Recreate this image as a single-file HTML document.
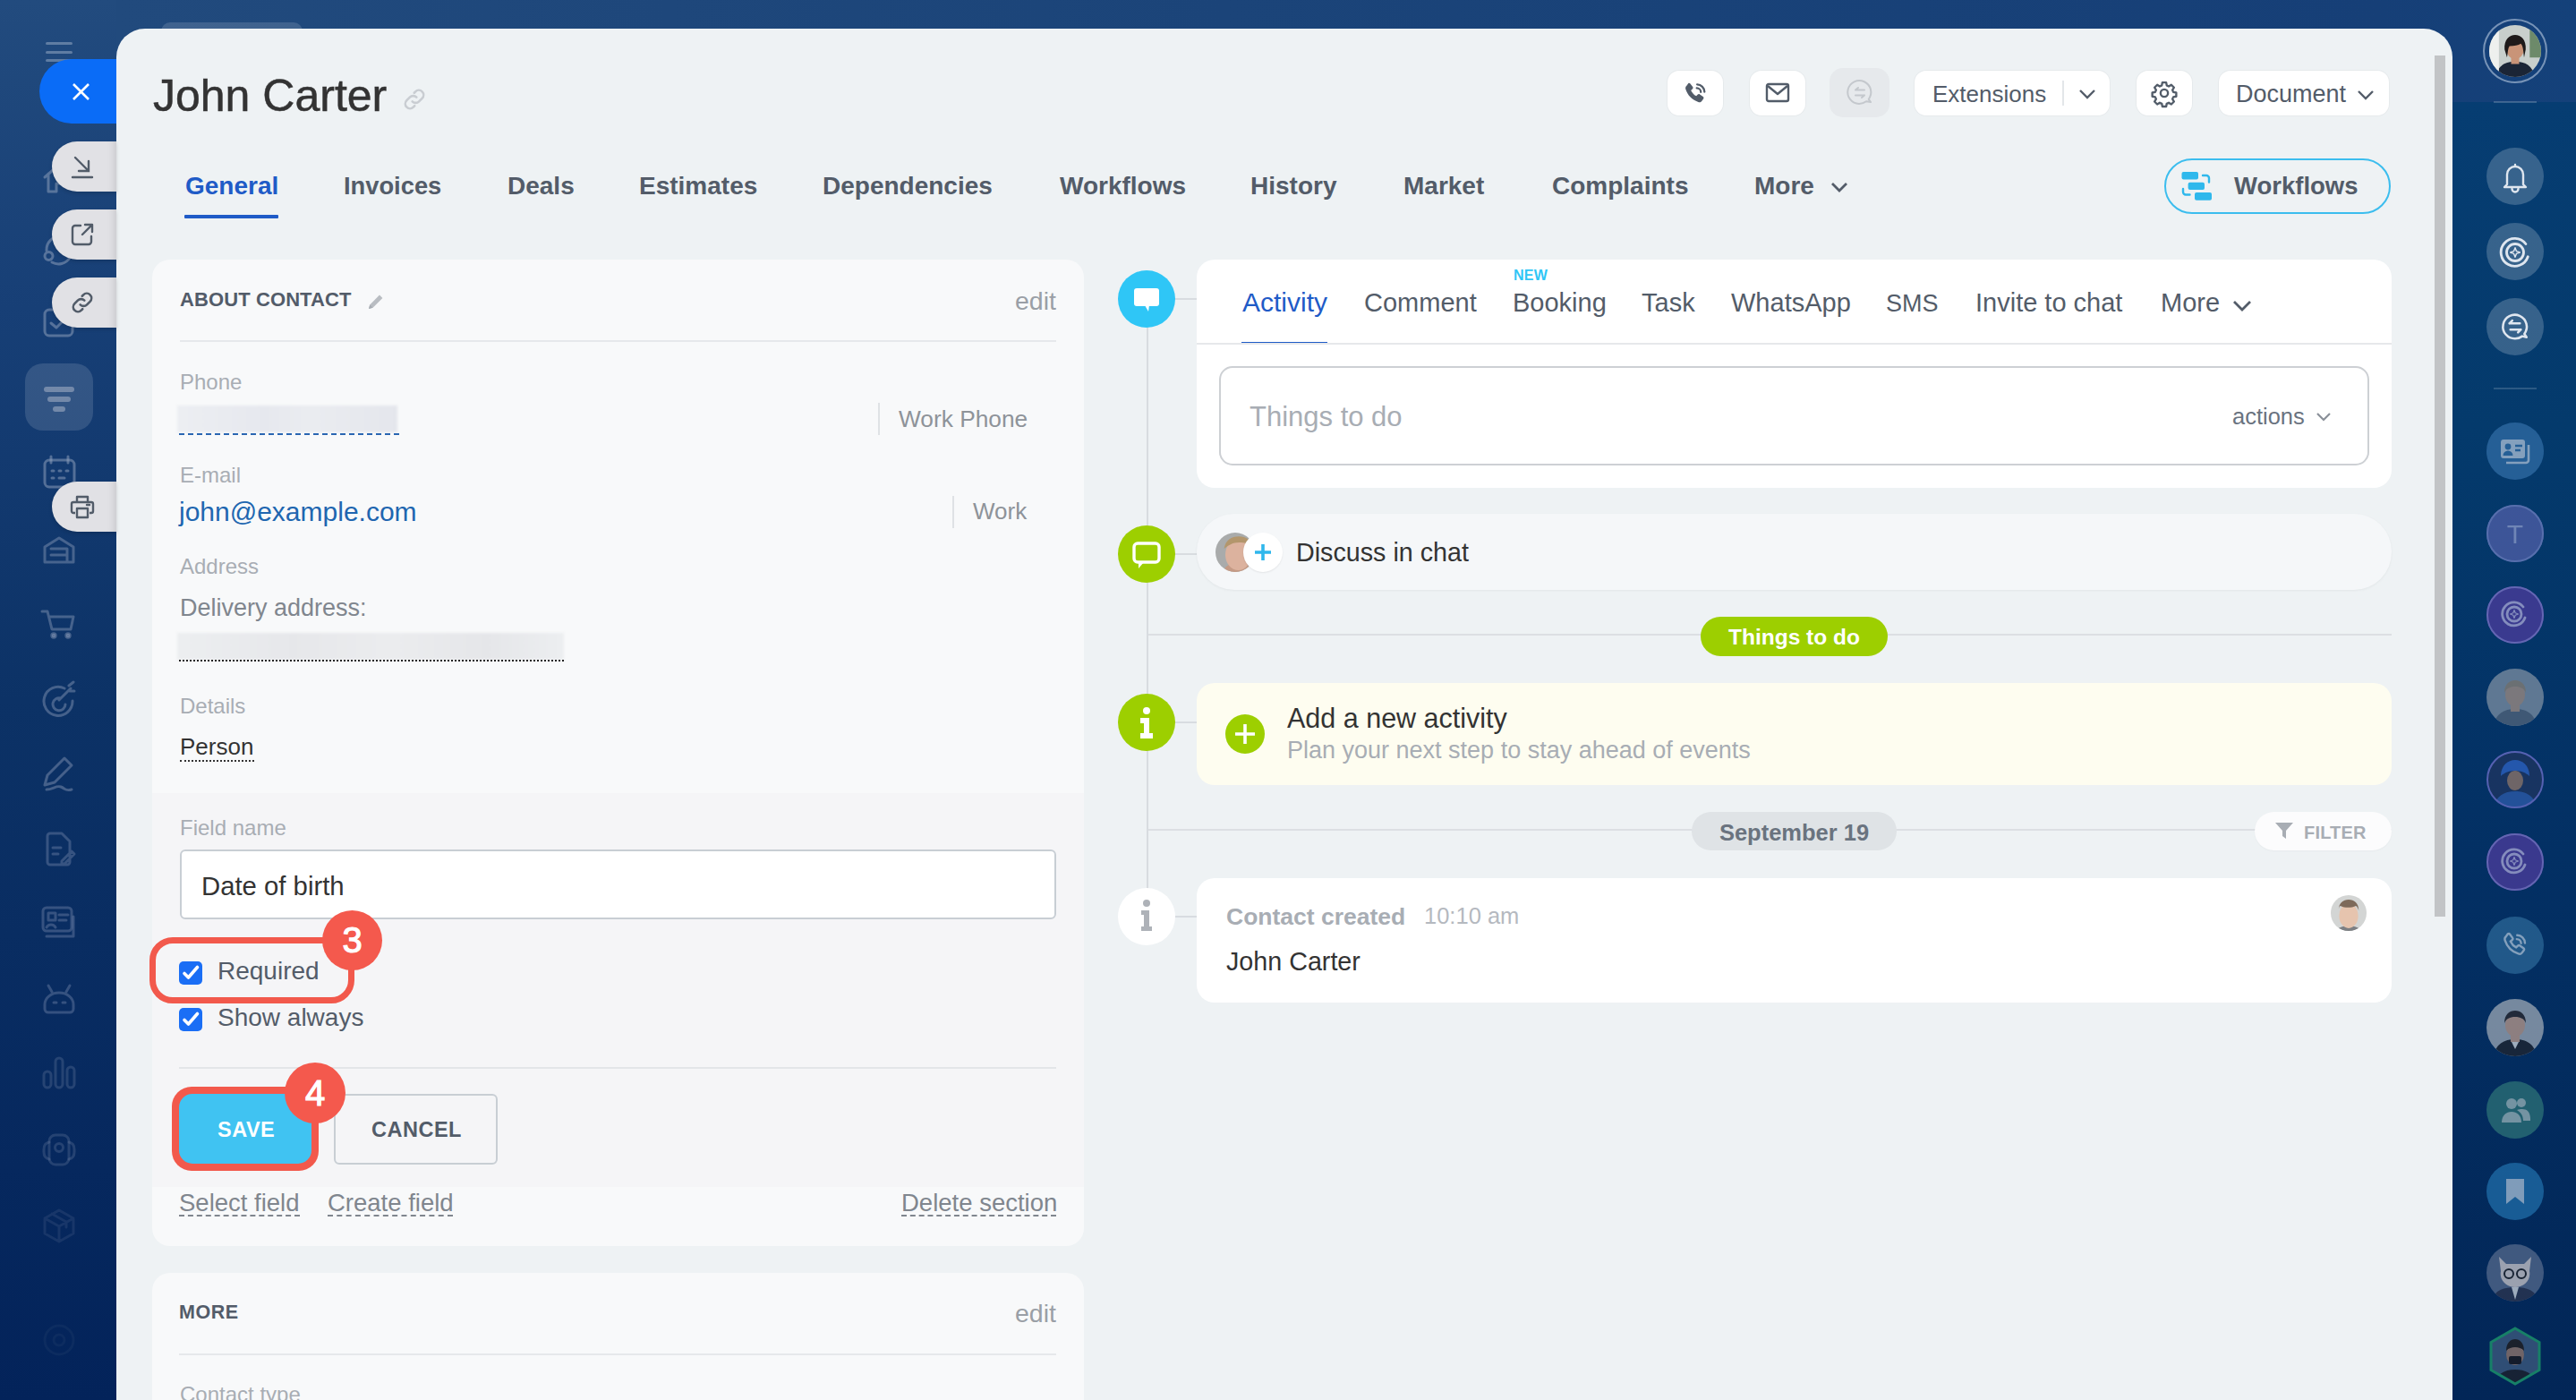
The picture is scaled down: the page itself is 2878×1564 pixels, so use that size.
<!DOCTYPE html>
<html><head><meta charset="utf-8">
<style>
*{box-sizing:border-box;margin:0;padding:0}
html,body{width:2878px;height:1564px;overflow:hidden}
body{position:relative;font-family:"Liberation Sans",sans-serif;background:linear-gradient(180deg,#224b7e 0%,#173f76 22%,#0c3266 50%,#03235a 100%);color:#333}
.a{position:absolute}
.t{position:absolute;line-height:1;white-space:nowrap}
.b{font-weight:bold}
.panel{left:130px;top:32px;width:2610px;height:1600px;background:#eef2f4;border-radius:32px 32px 0 0}
.hbtn{position:absolute;top:79px;height:50px;background:#fff;border-radius:13px;box-shadow:0 0 0 1px rgba(0,0,0,.03)}
.tab{position:absolute;top:194px;font-size:28px;font-weight:bold;color:#535c69;line-height:1}
.card{position:absolute;border-radius:20px}
.lbl{position:absolute;font-size:24px;color:#a8adb4;line-height:1;white-space:nowrap}
.atab{position:absolute;top:324px;font-size:29px;color:#535c69;line-height:1;white-space:nowrap}
.circ{position:absolute;left:1249px;width:64px;height:64px;border-radius:50%}
.rs{position:absolute;left:2778px;width:64px;height:64px;border-radius:50%}
svg{position:absolute;overflow:visible}
</style></head>
<body>
<!-- left rail -->
<div class="a" style="left:130px;top:0;width:2748px;height:114px;background:linear-gradient(90deg,#214a7d,#1b4479 45%,#163f77 92%,#14417a)"></div>

<div class="a" style="left:180px;top:25px;width:158px;height:20px;background:rgba(255,255,255,.14);border-radius:10px 10px 0 0"></div>
<!-- left sidebar icons (faint) -->
<div class="a" style="left:51px;top:47px;width:30px;height:3px;background:rgba(200,210,225,.38);border-radius:2px"></div>
<div class="a" style="left:51px;top:57px;width:30px;height:3px;background:rgba(200,210,225,.38);border-radius:2px"></div>
<div class="a" style="left:51px;top:66px;width:30px;height:3px;background:rgba(200,210,225,.38);border-radius:2px"></div>
<svg style="left:0;top:0" width="130" height="1564" viewBox="0 0 130 1564" fill="none" stroke-width="3" stroke-linecap="round" stroke-linejoin="round">
 <g stroke="rgba(150,165,192,.5)">
 <path d="M50 198l16-14 16 14M54 194v20h9v-9h6"/>
 <path d="M52 280a15 15 0 0 1 16-16M50 286a4.5 4.5 0 1 0 9 0a4.5 4.5 0 1 0-9 0M58 293a15 15 0 0 0 20-5"/>
 <rect x="50" y="346" width="31" height="29" rx="5"/><path d="M57 361l6 5 9-9"/>
 <rect x="50" y="514" width="33" height="30" rx="5"/><path d="M57 510v7M76 510v7M58 526h2M66 526h2M74 526h2M58 534h2M66 534h6"/>
 </g>
 <g stroke="rgba(140,155,185,.45)">
 <path d="M50 628v-17l16-10 16 10v17zM57 613h18v15M57 620h18"/>
 <path d="M47 683h6l5 20h21l3-14H55"/><circle cx="60" cy="710" r="2.2" fill="rgba(140,155,185,.5)"/><circle cx="76" cy="710" r="2.2" fill="rgba(140,155,185,.5)"/>
 <path d="M81 783a16 16 0 1 1-9-14M73 787a7 7 0 1 1-5-7M66 782l13-13M77 766l5-4M78 772h5"/>
 <path d="M50 877l3-11 19-19 8 8-19 19zM52 882c7 0 11-5 16-3s5 5 12 3"/>
 </g>
 <g stroke="rgba(130,145,178,.38)">
 <path d="M56 931h13l9 9v23a3 3 0 0 1-3 3H56a3 3 0 0 1-3-3V934a3 3 0 0 1 3-3zM59 947h9M59 954h6M69 962l11-11 3 3-11 11h-3z"/>
 <rect x="48" y="1014" width="32" height="26" rx="4"/><path d="M52 1046h30v-22M54 1020h8v8h-8zM66 1022h10M66 1028h8M52 1036c2-4 8-4 10 0"/>
 <path d="M50 1122a16 13 0 0 1 32 0v5a4 4 0 0 1-4 4H54a4 4 0 0 1-4-4zM54 1101l4 7M78 1101l-4 7M60 1120h3M70 1120h3"/>
 </g>
 <g stroke="rgba(120,135,170,.28)">
 <rect x="49" y="1197" width="8" height="18" rx="4"/><rect x="62" y="1182" width="8" height="33" rx="4"/><rect x="75" y="1192" width="8" height="23" rx="4"/>
 <rect x="55" y="1268" width="22" height="33" rx="7"/><circle cx="66" cy="1282" r="4.5"/><path d="M55 1276c-5 1-6 4-6 8v3c0 4 1 7 6 8M77 1276c5 1 6 4 6 8v3c0 4-1 7-6 8"/>
 </g>
 <g stroke="rgba(110,125,160,.18)">
 <path d="M66 1352l16 9v17l-16 9-16-9v-17zM50 1361l16 9 16-9M66 1370v17M58 1356l16 9v6"/>
 </g>
 <g stroke="rgba(100,115,150,.1)"><circle cx="66" cy="1497" r="16"/><circle cx="66" cy="1497" r="6"/></g>
</svg>
<div class="a" style="left:28px;top:406px;width:76px;height:75px;background:rgba(255,255,255,.13);border-radius:20px"></div>
<div class="a" style="left:49px;top:432px;width:34px;height:6px;background:rgba(170,180,200,.55);border-radius:3px"></div>
<div class="a" style="left:53px;top:443px;width:26px;height:6px;background:rgba(170,180,200,.55);border-radius:3px"></div>
<div class="a" style="left:59px;top:454px;width:14px;height:6px;background:rgba(170,180,200,.55);border-radius:3px"></div>


<!-- right sidebar -->
<div class="a" style="left:2740px;top:114px;width:138px;height:1450px;background:linear-gradient(180deg,#063d72 0%,#043a6c 25%,#033064 58%,#022657 100%)"></div>

<div class="a" style="left:2786px;top:113px;width:48px;height:2px;background:rgba(255,255,255,.2)"></div>
<div class="a" style="left:2774px;top:21px;width:72px;height:72px;border-radius:50%;border:2px solid rgba(200,215,235,.55)"></div>
<svg style="left:2781px;top:28px" width="58" height="58" viewBox="0 0 64 64"><defs><clipPath id="c57"><circle cx="32" cy="32" r="32"/></clipPath></defs><g clip-path="url(#c57)"><rect width="64" height="64" fill="#c8cfcc"/><path d="M8 64c2-14 12-19 24-19s22 5 24 19z" fill="#1b2536"/><rect x="27" y="38" width="10" height="10" fill="#c99478"/><ellipse cx="32" cy="29" rx="11" ry="13" fill="#c99478"/><path d="M19 30c-1-12 6-18 13-18s14 6 13 18l-2 10c-1-8-1-14-4-17-3 2-8 3-14 3-2 3-2 8-3 14z" fill="#1e1a1a"/><rect x="0" y="0" width="12" height="64" fill="#eef0ee"/><rect x="50" y="0" width="14" height="40" fill="#6d8a6a"/></g></svg>
<div class="rs" style="top:165px;background:rgba(255,255,255,.2)"></div>
<div class="rs" style="top:249px;background:rgba(255,255,255,.2)"></div>
<div class="rs" style="top:333px;background:rgba(255,255,255,.2)"></div>
<svg style="left:2794px;top:181px" width="32" height="34" viewBox="0 0 32 34" fill="none" stroke="#dfe6ef" stroke-width="2.4" stroke-linecap="round" stroke-linejoin="round"><path d="M7 25V14a9 9 0 0 1 18 0v11l3 3H4zM16 3v2M12.5 30a3.5 3.5 0 0 0 7 0"/></svg>
<svg style="left:2791px;top:263px" width="38" height="38" viewBox="0 0 32 32" fill="none" stroke="#dfe6ef" stroke-width="2.4" stroke-linecap="round"><path d="M28 20a13 13 0 1 1-2-12" /><circle cx="16" cy="16" r="8"/><path d="M16 11.5l1.2 3.3 3.3 1.2-3.3 1.2L16 20.5l-1.2-3.3-3.3-1.2 3.3-1.2z" stroke-width="1.2" stroke-linejoin="round"/></svg>
<svg style="left:2793px;top:348px" width="34" height="34" viewBox="0 0 32 32" fill="none" stroke="#dfe6ef" stroke-width="2.4" stroke-linecap="round" stroke-linejoin="round"><path d="M28 27l-2.3-3.5A12.5 12.5 0 1 0 16 28.5a12.5 12.5 0 0 0 7.5-2.5z"/><path d="M10 12.5h11M10 12.5l3-3M22 19H11M22 19l-3 3"/></svg>
<div class="a" style="left:2786px;top:433px;width:48px;height:2px;background:rgba(255,255,255,.16)"></div>
<div class="a" style="left:0;top:0;width:2878px;height:1564px;opacity:.78">
<div class="rs" style="top:472px;background:#2f6aa3"></div>
<svg style="left:2792px;top:489px" width="36" height="32" viewBox="0 0 36 32"><rect x="2" y="2" width="27" height="21" rx="3" fill="#a9bdd4"/><circle cx="10" cy="10" r="3.4" fill="#2f6aa3"/><path d="M4.5 20a5.5 5.5 0 0 1 11 0z" fill="#2f6aa3"/><path d="M18 9h8M18 14h6" stroke="#2f6aa3" stroke-width="2.4"/><path d="M33 8v17a3 3 0 0 1-3 3H8" fill="none" stroke="#a9bdd4" stroke-width="2.6"/></svg>
<svg style="left:2778px;top:564px" width="64" height="64" viewBox="0 0 64 64"><defs><clipPath id="c596"><circle cx="32" cy="32" r="32"/></clipPath></defs><g clip-path="url(#c596)"><rect width="64" height="64" fill="#4d5ea6"/><text x="32" y="43" font-family="Liberation Sans" font-size="30" fill="#8e9bcc" text-anchor="middle">T</text></g><circle cx="32" cy="32" r="31" fill="none" stroke="#6f7fc0" stroke-width="2"/></svg>
<svg style="left:2778px;top:655px" width="64" height="64" viewBox="0 0 64 64"><defs><clipPath id="c687"><circle cx="32" cy="32" r="32"/></clipPath></defs><g clip-path="url(#c687)"><rect width="64" height="64" fill="#4a3c9a"/><g transform="translate(15 15)" fill="none" stroke="#a9a6d6" stroke-width="2.8" stroke-linecap="round"><path d="M28 20a13 13 0 1 1-2-12" /><circle cx="16" cy="16" r="8"/><path d="M16 11.5l1.2 3.3 3.3 1.2-3.3 1.2L16 20.5l-1.2-3.3-3.3-1.2 3.3-1.2z" stroke-width="1.2" stroke-linejoin="round"/></g></g><circle cx="32" cy="32" r="31" fill="none" stroke="#7f74c8" stroke-width="2"/></svg>
<svg style="left:2778px;top:747px" width="64" height="64" viewBox="0 0 64 64"><defs><clipPath id="c779"><circle cx="32" cy="32" r="32"/></clipPath></defs><g clip-path="url(#c779)"><rect width="64" height="64" fill="#8e9aa8"/><path d="M8 64c2-14 12-19 24-19s22 5 24 19z" fill="#5d6a7c"/><rect x="27" y="38" width="10" height="10" fill="#b89a86"/><ellipse cx="32" cy="29" rx="11" ry="13" fill="#b89a86"/><path d="M20 27c0-10 6-14 12-14s12 4 12 14c-2-5-6-7-12-7s-10 2-12 7z" fill="#a08e78"/><rect width="64" height="64" fill="#0a3a72" opacity="0.15"/></g></svg>
<svg style="left:2778px;top:839px" width="64" height="64" viewBox="0 0 64 64"><defs><clipPath id="c871"><circle cx="32" cy="32" r="32"/></clipPath></defs><g clip-path="url(#c871)"><rect width="64" height="64" fill="#1f3560"/><path d="M8 64c2-14 12-19 24-19s22 5 24 19z" fill="#2c5aa8"/><ellipse cx="32" cy="33" rx="9" ry="11" fill="#8d7468"/><path d="M16 28c0-12 8-18 16-18s16 6 16 18c-4-4-10-6-16-6s-12 2-16 6z" fill="#2e62c0"/></g><circle cx="32" cy="32" r="31" fill="none" stroke="#6c6fc8" stroke-width="2"/></svg>
<svg style="left:2778px;top:931px" width="64" height="64" viewBox="0 0 64 64"><defs><clipPath id="c963"><circle cx="32" cy="32" r="32"/></clipPath></defs><g clip-path="url(#c963)"><rect width="64" height="64" fill="#4a3c9a"/><g transform="translate(15 15)" fill="none" stroke="#a9a6d6" stroke-width="2.8" stroke-linecap="round"><path d="M28 20a13 13 0 1 1-2-12" /><circle cx="16" cy="16" r="8"/><path d="M16 11.5l1.2 3.3 3.3 1.2-3.3 1.2L16 20.5l-1.2-3.3-3.3-1.2 3.3-1.2z" stroke-width="1.2" stroke-linejoin="round"/></g></g><circle cx="32" cy="32" r="31" fill="none" stroke="#7f74c8" stroke-width="2"/></svg>
<div class="rs" style="top:1024px;background:#2a6595"></div>
<svg style="left:2792px;top:1038px" width="36" height="36" viewBox="0 0 24 24"><path d="M6.6 3.5c.5-.3 1.1-.2 1.5.3l1.9 2.6c.4.5.3 1.2-.1 1.6l-1.3 1.1c.8 1.8 2.3 3.5 4.2 4.5l1.2-1.2c.4-.4 1.1-.5 1.6-.1l2.6 1.9c.5.4.6 1.1.2 1.6l-1.3 1.8c-.6.8-1.7 1.1-2.7.7C9.2 16.5 6 13.2 4.4 8.2c-.3-1 0-2.1.8-2.7z" fill="none" stroke="#a9c0d6" stroke-width="1.6"/><path d="M13.5 4.5a6 6 0 0 1 5.8 5.8M13.2 7.4a3.2 3.2 0 0 1 3.2 3.1" stroke="#a9c0d6" stroke-width="1.6" fill="none" stroke-linecap="round"/></svg>
<svg style="left:2778px;top:1116px" width="64" height="64" viewBox="0 0 64 64"><defs><clipPath id="c1148"><circle cx="32" cy="32" r="32"/></clipPath></defs><g clip-path="url(#c1148)"><rect width="64" height="64" fill="#97a3b1"/><path d="M8 64c2-14 12-19 24-19s22 5 24 19z" fill="#1f2530"/><rect x="27" y="38" width="10" height="10" fill="#b4968a"/><ellipse cx="32" cy="29" rx="11" ry="13" fill="#b4968a"/><path d="M20 27c0-10 6-14 12-14s12 4 12 14c-2-5-6-7-12-7s-10 2-12 7z" fill="#2a2a30"/><path d="M28 48l4 8 4-8z" fill="#c9d0d8"/></g></svg>
<div class="rs" style="top:1208px;background:#2b6f76"></div>
<svg style="left:2794px;top:1224px" width="34" height="32" viewBox="0 0 34 32"><circle cx="12" cy="9" r="6" fill="#94b1b6"/><path d="M1 30c0-8 5-12 11-12s11 4 11 12z" fill="#94b1b6"/><circle cx="23" cy="8" r="5" fill="#94b1b6"/><path d="M18 16c2-1 4-1 6-1 5 0 9 3 9 11v2h-8c0-5-2-9-7-12z" fill="#94b1b6"/></svg>
<div class="rs" style="top:1299px;background:#1f6ba6"></div>
<svg style="left:2799px;top:1316px" width="22" height="30" viewBox="0 0 22 30"><path d="M1 1h20v28l-10-8-10 8z" fill="#a3bdd5"/></svg>
<svg style="left:2778px;top:1390px" width="64" height="64" viewBox="0 0 64 64"><defs><clipPath id="c1422"><circle cx="32" cy="32" r="32"/></clipPath></defs><g clip-path="url(#c1422)"><rect width="64" height="64" fill="#52678a"/><path d="M6 64c2-12 12-16 26-16s24 4 26 16z" fill="#2b3550"/><path d="M28 48l4 14 4-14z" fill="#c9d0d8"/><path d="M14 14l8 8h20l8-8-2 16c2 10-6 18-16 18s-18-8-16-18z" fill="#c6c3c8"/><circle cx="25" cy="33" r="5" fill="none" stroke="#20232a" stroke-width="2"/><circle cx="39" cy="33" r="5" fill="none" stroke="#20232a" stroke-width="2"/></g></svg>
<svg style="left:2776px;top:1481px" width="68" height="68" viewBox="0 0 68 68"><defs><clipPath id="hx"><path d="M34 3l27 15.5v31L34 65 7 49.5v-31z"/></clipPath></defs><g clip-path="url(#hx)"><rect width="68" height="68" fill="#3c5a7e"/><path d="M10 68c2-14 12-19 24-19s22 5 24 19z" fill="#1d222c"/><ellipse cx="34" cy="32" rx="10" ry="12" fill="#8f766c"/><path d="M24 28c0-9 5-13 10-13s10 4 10 13c-3-3-6-4-10-4s-7 1-10 4z" fill="#232020"/><rect x="27" y="34" width="14" height="9" rx="2" fill="#1a1a1f"/></g><path d="M34 3l27 15.5v31L34 65 7 49.5v-31z" fill="none" stroke="#1e9a6c" stroke-width="3"/></svg>
</div>

<!-- panel -->
<div class="a panel"></div>

<!-- header -->
<div class="t" style="left:171px;top:82px;font-size:50px;color:#333;-webkit-text-stroke:0.5px #333">John Carter</div>
<svg style="left:449px;top:97px" width="28" height="28" viewBox="0 0 24 24" fill="none" stroke="#c9cdd2" stroke-width="2.2" stroke-linecap="round"><path d="M10 14a4.5 4.5 0 0 0 6.4 0l3-3a4.5 4.5 0 0 0-6.4-6.4l-1.2 1.2"/><path d="M14 10a4.5 4.5 0 0 0-6.4 0l-3 3a4.5 4.5 0 0 0 6.4 6.4l1.2-1.2"/></svg>

<div class="hbtn" style="left:1863px;width:62px"></div>
<svg style="left:1877px;top:88px" width="34" height="34" viewBox="0 0 24 24"><path d="M6.6 3.5c.5-.3 1.1-.2 1.5.3l1.9 2.6c.4.5.3 1.2-.1 1.6l-1.3 1.1c.8 1.8 2.3 3.5 4.2 4.5l1.2-1.2c.4-.4 1.1-.5 1.6-.1l2.6 1.9c.5.4.6 1.1.2 1.6l-1.3 1.8c-.6.8-1.7 1.1-2.7.7C9.2 16.5 6 13.2 4.4 8.2c-.3-1 0-2.1.8-2.7z" fill="#525c69"/><path d="M13.5 4.5a6 6 0 0 1 5.8 5.8M13.2 7.4a3.2 3.2 0 0 1 3.2 3.1" stroke="#525c69" stroke-width="1.6" fill="none" stroke-linecap="round"/></svg>
<div class="hbtn" style="left:1955px;width:62px"></div>
<svg style="left:1972px;top:91px" width="28" height="26" viewBox="0 0 28 26"><rect x="2" y="3" width="24" height="19" rx="2" fill="none" stroke="#525c69" stroke-width="2.4"/><path d="M3 5l11 9 11-9" fill="none" stroke="#525c69" stroke-width="2.4" stroke-linejoin="round"/></svg>
<div class="a" style="left:2044px;top:76px;width:67px;height:55px;background:#e6e9ec;border-radius:15px"></div>
<svg style="left:2062px;top:88px" width="32" height="32" viewBox="0 0 32 32" fill="none" stroke="#c4c8cd" stroke-width="2"><path d="M28 26l-2.3-3.2A13 13 0 1 0 15 28a13 13 0 0 0 8-2.7z" stroke-linejoin="round"/><path d="M11 12.5h10M11 12.5l3-2.5M21 18.5H11M21 18.5l-3 2.5" stroke-linecap="round"/></svg>
<div class="hbtn" style="left:2139px;width:218px"></div>
<div class="t" style="left:2159px;top:92px;font-size:26px;color:#535c69">Extensions</div>
<div class="a" style="left:2304px;top:90px;width:2px;height:28px;background:#e3e6e9"></div>
<svg style="left:2322px;top:99px" width="20" height="12" viewBox="0 0 20 12"><path d="M2 2l8 8 8-8" fill="none" stroke="#535c69" stroke-width="2.4"/></svg>
<div class="hbtn" style="left:2387px;width:62px"></div>
<svg style="left:2403px;top:89px" width="30" height="30" viewBox="0 0 24 24" fill="none" stroke="#525c69" stroke-width="1.9"><path d="M10.3 2.5h3.4l.5 2.6 1.8.9 2.3-1.4 2.4 2.4-1.4 2.3.8 1.8 2.6.5v3.4l-2.6.5-.8 1.8 1.4 2.3-2.4 2.4-2.3-1.4-1.8.8-.5 2.6h-3.4l-.5-2.6-1.8-.8-2.3 1.4-2.4-2.4 1.4-2.3-.8-1.8-2.6-.5v-3.4l2.6-.5.8-1.8-1.4-2.3 2.4-2.4 2.3 1.4 1.8-.9z" stroke-linejoin="round"/><circle cx="12" cy="12" r="3.3"/></svg>
<div class="hbtn" style="left:2479px;width:190px"></div>
<div class="t" style="left:2498px;top:92px;font-size:27px;color:#535c69">Document</div>
<svg style="left:2633px;top:100px" width="20" height="12" viewBox="0 0 20 12"><path d="M2 2l8 8 8-8" fill="none" stroke="#535c69" stroke-width="2.4"/></svg>

<!-- tabs -->
<div class="tab" style="left:207px;color:#1f5bc7">General</div>
<div class="a" style="left:206px;top:240px;width:105px;height:4px;background:#1f5bc7;border-radius:1px"></div>
<div class="tab" style="left:384px;font-size:27.3px">Invoices</div>
<div class="tab" style="left:567px">Deals</div>
<div class="tab" style="left:714px">Estimates</div>
<div class="tab" style="left:919px">Dependencies</div>
<div class="tab" style="left:1184px">Workflows</div>
<div class="tab" style="left:1397px">History</div>
<div class="tab" style="left:1568px">Market</div>
<div class="tab" style="left:1734px">Complaints</div>
<div class="tab" style="left:1960px">More</div>
<svg style="left:2045px;top:202px" width="20" height="14" viewBox="0 0 20 14"><path d="M2 3l8 8 8-8" fill="none" stroke="#535c69" stroke-width="2.8"/></svg>

<!-- workflows button -->
<div class="a" style="left:2418px;top:177px;width:253px;height:62px;border:2px solid #3bbdee;border-radius:31px"></div>
<svg style="left:2430px;top:185px" width="50" height="45" viewBox="0 0 50 45"><rect x="7.5" y="7" width="18.5" height="8.4" rx="2" fill="#2fb8ec"/><rect x="14.6" y="18.7" width="18.4" height="8.3" rx="2" fill="#2fb8ec"/><rect x="22" y="30" width="19" height="8.7" rx="2" fill="#2fb8ec"/><path d="M31 11h4a3 3 0 0 1 3 3v4.5M9 26v3.5a3 3 0 0 0 3 3h4.5" fill="none" stroke="#2fb8ec" stroke-width="2.4" stroke-linecap="round"/></svg>
<div class="t b" style="left:2496px;top:194px;font-size:27.5px;color:#535c69">Workflows</div>

<!-- about contact card -->
<div class="card" style="left:170px;top:290px;width:1041px;height:1102px;background:#f8f9fa;overflow:hidden">
  <div class="a" style="left:0;top:596px;width:1041px;height:440px;background:#f5f5f7"></div>
</div>
<div class="t b" style="left:201px;top:324px;font-size:22px;color:#535c69;letter-spacing:0.1px">ABOUT CONTACT</div>
<svg style="left:409px;top:326px" width="22" height="22" viewBox="0 0 22 22"><path d="M3 19l1.2-4.6L15 3.6l3.4 3.4L7.6 17.8z" fill="#b9bdc2"/><path d="M3 19l1.2-4.6 3.4 3.4z" fill="#a8adb3"/></svg>
<div class="t" style="left:1134px;top:322px;font-size:28.5px;color:#9a9fa6">edit</div>
<div class="a" style="left:201px;top:380px;width:979px;height:2px;background:#e6e8eb"></div>

<div class="lbl" style="left:201px;top:415px">Phone</div>
<div class="a" style="left:198px;top:453px;width:246px;height:30px;background:linear-gradient(90deg,#eceef2,#e6e8ee 40%,#eaecf0 60%,#e4e6ec);filter:blur(1.5px)"></div>
<div class="a" style="left:200px;top:484px;width:246px;height:0;border-top:2.5px dashed #2a66b2"></div>
<div class="a" style="left:981px;top:450px;width:2px;height:36px;background:#dfe2e5"></div>
<div class="t" style="left:1004px;top:455px;font-size:26.3px;color:#8e9399">Work Phone</div>

<div class="lbl" style="left:201px;top:519px">E-mail</div>
<div class="t" style="left:200px;top:557px;font-size:30px;color:#2066b0">john@example.com</div>
<div class="a" style="left:1064px;top:554px;width:2px;height:36px;background:#dfe2e5"></div>
<div class="t" style="left:1087px;top:558px;font-size:26px;color:#8e9399">Work</div>

<div class="lbl" style="left:201px;top:621px">Address</div>
<div class="t" style="left:201px;top:666px;font-size:27px;color:#80868e">Delivery address:</div>
<div class="a" style="left:198px;top:707px;width:432px;height:30px;background:linear-gradient(90deg,#eceef0,#e6e7ea 30%,#ebecee 55%,#e5e6e9 80%,#eceef0);filter:blur(1.5px)"></div>
<div class="a" style="left:200px;top:737px;width:430px;height:0;border-top:2.5px dotted #222"></div>

<div class="lbl" style="left:201px;top:777px">Details</div>
<div class="t" style="left:201px;top:821px;font-size:26px;color:#333">Person</div>
<div class="a" style="left:201px;top:849px;width:83px;height:0;border-top:2px dotted #333"></div>

<div class="lbl" style="left:201px;top:913px">Field name</div>
<div class="a" style="left:201px;top:949px;width:979px;height:78px;background:#fff;border:2px solid #c8ced4;border-radius:6px"></div>
<div class="t" style="left:225px;top:975px;font-size:29.3px;color:#333">Date of birth</div>

<!-- checkboxes -->
<div class="a" style="left:200px;top:1074px;width:26px;height:26px;background:#1a6ef5;border-radius:5px"></div>
<svg style="left:200px;top:1074px" width="26" height="26" viewBox="0 0 26 26"><path d="M6 13.5l4.5 4.5L20.5 6.5" fill="none" stroke="#fff" stroke-width="3.6" stroke-linecap="round" stroke-linejoin="round"/></svg>
<div class="t" style="left:243px;top:1071px;font-size:28px;color:#535c69">Required</div>
<div class="a" style="left:200px;top:1126px;width:26px;height:26px;background:#1a6ef5;border-radius:5px"></div>
<svg style="left:200px;top:1126px" width="26" height="26" viewBox="0 0 26 26"><path d="M6 13.5l4.5 4.5L20.5 6.5" fill="none" stroke="#fff" stroke-width="3.6" stroke-linecap="round" stroke-linejoin="round"/></svg>
<div class="t" style="left:243px;top:1123px;font-size:28px;color:#535c69">Show always</div>
<!-- highlight 3 -->
<div class="a" style="left:167px;top:1047px;width:229px;height:74px;border:7px solid #f2594c;border-radius:26px"></div>
<div class="a" style="left:360px;top:1017px;width:67px;height:67px;background:#f4594d;border-radius:50%"></div>
<div class="t" style="left:360px;top:1030px;width:67px;text-align:center;font-size:40px;color:#fff;-webkit-text-stroke:1.2px #fff">3</div>

<div class="a" style="left:200px;top:1192px;width:980px;height:2px;background:#e3e5e8"></div>
<!-- buttons -->
<div class="a" style="left:373px;top:1222px;width:183px;height:79px;border:2px solid #c8ced4;border-radius:6px"></div>
<div class="t b" style="left:415px;top:1251px;font-size:23.5px;color:#535c69;letter-spacing:0.5px">CANCEL</div>
<div class="a" style="left:192px;top:1214px;width:164px;height:94px;background:#f2594c;border-radius:22px"></div>
<div class="a" style="left:200px;top:1222px;width:148px;height:78px;background:#40c3f2;border-radius:15px"></div>
<div class="t b" style="left:243px;top:1251px;font-size:23.5px;color:#fff;letter-spacing:0.5px">SAVE</div>
<div class="a" style="left:318px;top:1187px;width:68px;height:68px;background:#f4594d;border-radius:50%"></div>
<div class="t" style="left:318px;top:1201px;width:68px;text-align:center;font-size:40px;color:#fff;-webkit-text-stroke:1.2px #fff">4</div>

<div class="t" style="left:200px;top:1330px;font-size:27.5px;color:#80868e">Select field</div>
<div class="a" style="left:200px;top:1357px;width:135px;height:0;border-top:2px dashed #80868e"></div>
<div class="t" style="left:366px;top:1330px;font-size:27.5px;color:#80868e">Create field</div>
<div class="a" style="left:366px;top:1357px;width:140px;height:0;border-top:2px dashed #80868e"></div>
<div class="t" style="left:1007px;top:1330px;font-size:27.5px;color:#80868e">Delete section</div>
<div class="a" style="left:1007px;top:1357px;width:173px;height:0;border-top:2px dashed #80868e"></div>

<!-- more card -->
<div class="card" style="left:170px;top:1422px;width:1041px;height:300px;background:#f8f9fa"></div>
<div class="t b" style="left:200px;top:1456px;font-size:21.5px;color:#535c69;letter-spacing:0.5px">MORE</div>
<div class="t" style="left:1134px;top:1453px;font-size:28.5px;color:#9a9fa6">edit</div>
<div class="a" style="left:200px;top:1512px;width:980px;height:2px;background:#e6e8eb"></div>
<div class="lbl" style="left:201px;top:1546px">Contact type</div>

<!-- timeline -->
<div class="a" style="left:1281px;top:334px;width:2px;height:660px;background:#d8dce0"></div>
<div class="a" style="left:1283px;top:333px;width:54px;height:2px;background:#d8dce0"></div>
<div class="a" style="left:1283px;top:618px;width:54px;height:2px;background:#d8dce0"></div>
<div class="a" style="left:1283px;top:806px;width:54px;height:2px;background:#d8dce0"></div>
<div class="a" style="left:1283px;top:1023px;width:54px;height:2px;background:#d8dce0"></div>

<!-- activity card -->
<div class="card" style="left:1337px;top:290px;width:1335px;height:255px;background:#fff"></div>
<div class="circ" style="top:302px;background:#2fc6f6"></div>
<svg style="left:1265px;top:320px" width="34" height="30" viewBox="0 0 34 30"><rect x="2" y="2" width="28" height="20" rx="3" fill="#fff"/><path d="M14 21l4 7 1-7z" fill="#fff"/></svg>
<div class="atab" style="left:1388px;font-size:30px;top:323px;color:#1f5bc7">Activity</div>
<div class="a" style="left:1387px;top:382px;width:96px;height:3px;background:#1f5bc7"></div>
<div class="a" style="left:1337px;top:383px;width:1335px;height:2px;background:#e6e8eb"></div>
<div class="atab" style="left:1524px">Comment</div>
<div class="t b" style="left:1691px;top:300px;font-size:16px;color:#2fc6f6;letter-spacing:0.3px">NEW</div>
<div class="atab" style="left:1690px">Booking</div>
<div class="atab" style="left:1834px">Task</div>
<div class="atab" style="left:1934px">WhatsApp</div>
<div class="atab" style="left:2107px;font-size:27px;top:326px">SMS</div>
<div class="atab" style="left:2207px">Invite to chat</div>
<div class="atab" style="left:2414px">More</div>
<svg style="left:2494px;top:334px" width="22" height="14" viewBox="0 0 22 14"><path d="M2 3l9 9 9-9" fill="none" stroke="#535c69" stroke-width="2.8"/></svg>
<div class="a" style="left:1362px;top:409px;width:1285px;height:111px;border:2px solid #cdd0d4;border-radius:15px"></div>
<div class="t" style="left:1396px;top:450px;font-size:31px;color:#a8adb4">Things to do</div>
<div class="t" style="left:2494px;top:453px;font-size:25.5px;color:#6a737f">actions</div>
<svg style="left:2587px;top:460px" width="18" height="12" viewBox="0 0 18 12"><path d="M2 2l7 7 7-7" fill="none" stroke="#8a9099" stroke-width="2.2"/></svg>

<!-- discuss in chat -->
<div class="a" style="left:1337px;top:574px;width:1335px;height:85px;background:#f5f7f9;border-radius:42px;box-shadow:0 1px 3px rgba(0,0,0,.05)"></div>
<div class="circ" style="top:587px;background:#9dcf00"></div>
<svg style="left:1264px;top:604px" width="36" height="34" viewBox="0 0 36 34"><rect x="3" y="3" width="28" height="21" rx="4" fill="none" stroke="#fff" stroke-width="3.4"/><path d="M8 23v8l6-7" fill="#fff"/></svg>
<svg style="left:1358px;top:595px" width="44" height="44" viewBox="0 0 64 64"><defs><clipPath id="tav1"><circle cx="32" cy="32" r="32"/></clipPath></defs><g clip-path="url(#tav1)"><rect width="64" height="64" fill="#a9abab"/><path d="M14 64c0-10 8-14 22-14s22 4 22 14z" fill="#c49a85"/><ellipse cx="37" cy="36" rx="21" ry="25" fill="#dcb29e"/><path d="M14 26c2-14 12-20 24-20s20 6 22 16c-6-4-12-6-22-6s-16 4-24 10z" fill="#b3966c"/></g></svg>
<div class="a" style="left:1389px;top:595px;width:44px;height:44px;border-radius:50%;background:#fff;box-shadow:0 1px 2px rgba(0,0,0,.08)"></div>
<svg style="left:1399px;top:605px" width="24" height="24" viewBox="0 0 24 24"><path d="M12 3v18M3 12h18" stroke="#2fb7ec" stroke-width="3.6"/></svg>
<div class="t" style="left:1448px;top:603px;font-size:28.7px;color:#333">Discuss in chat</div>

<!-- things to do divider -->
<div class="a" style="left:1283px;top:708px;width:1389px;height:2px;background:#dcdfe3"></div>
<div class="a" style="left:1900px;top:689px;width:209px;height:44px;background:#9dcf00;border-radius:22px"></div>
<div class="t b" style="left:1900px;top:700px;width:209px;text-align:center;font-size:24.5px;color:#fff">Things to do</div>

<!-- add new activity -->
<div class="card" style="left:1337px;top:763px;width:1335px;height:114px;background:#fefdf0"></div>
<div class="circ" style="top:775px;background:#9dcf00"></div>
<svg style="left:1265px;top:789px" width="32" height="38" viewBox="0 0 32 38"><circle cx="16" cy="5" r="4" fill="#fff"/><path d="M9 13h10v17h4v6H9v-6h4V19H9z" fill="#fff"/></svg>
<div class="a" style="left:1369px;top:798px;width:44px;height:44px;border-radius:50%;background:#9dcf00"></div>
<svg style="left:1377px;top:806px" width="28" height="28" viewBox="0 0 28 28"><path d="M14 3v22M3 14h22" stroke="#fff" stroke-width="3.6"/></svg>
<div class="t" style="left:1438px;top:787px;font-size:30.5px;color:#333">Add a new activity</div>
<div class="t" style="left:1438px;top:825px;font-size:27px;color:#a8adb4">Plan your next step to stay ahead of events</div>

<!-- september 19 -->
<div class="a" style="left:1283px;top:926px;width:1389px;height:2px;background:#dcdfe3"></div>
<div class="a" style="left:1890px;top:907px;width:229px;height:43px;background:#dfe3e6;border-radius:22px"></div>
<div class="t b" style="left:1890px;top:918px;width:229px;text-align:center;font-size:25.5px;color:#6a737f">September 19</div>
<div class="a" style="left:2519px;top:907px;width:153px;height:43px;background:#fcfcfd;border-radius:22px;box-shadow:0 1px 2px rgba(0,0,0,.03)"></div>
<svg style="left:2541px;top:917px" width="22" height="22" viewBox="0 0 22 22"><path d="M1 2h20l-8 9v9l-4-3v-6z" fill="#a8adb4"/></svg>
<div class="t b" style="left:2574px;top:920px;font-size:20px;color:#a8adb4;letter-spacing:0.2px">FILTER</div>

<!-- contact created -->
<div class="card" style="left:1337px;top:981px;width:1335px;height:139px;background:#fff"></div>
<div class="circ" style="top:992px;background:#fff"></div>
<svg style="left:1265px;top:1004px" width="32" height="40" viewBox="0 0 32 40"><circle cx="16" cy="5" r="4" fill="#aeb2b8"/><path d="M10 13h9v18h3v5H10v-5h3V18h-3z" fill="#aeb2b8"/></svg>
<div class="t b" style="left:1370px;top:1011px;font-size:26.5px;color:#a8adb4">Contact created</div>
<div class="t" style="left:1591px;top:1011px;font-size:25.5px;color:#b5b9bf">10:10 am</div>
<div class="t" style="left:1370px;top:1060px;font-size:28.7px;color:#333">John Carter</div>
<svg style="left:2604px;top:1000px" width="40" height="40" viewBox="0 0 64 64"><defs><clipPath id="tav2"><circle cx="32" cy="32" r="32"/></clipPath></defs><g clip-path="url(#tav2)"><rect width="64" height="64" fill="#d3d5d4"/><path d="M10 64c2-6 10-9 22-9s20 3 22 9z" fill="#7d7f83"/><ellipse cx="32" cy="37" rx="17" ry="22" fill="#e6c4ae"/><path d="M14 28c0-14 8-20 18-20s18 6 18 20c-1-5-3-8-5-9-4 2-9 3-14 3s-10-1-14-3c-2 1-3 4-3 9z" fill="#7e6a5a"/></g></svg>

<!-- close pill -->
<div class="a" style="left:44px;top:66px;width:86px;height:72px;background:#0a6cf7;border-radius:36px 0 0 36px"></div>
<svg style="left:80px;top:92px" width="21" height="21" viewBox="0 0 21 21"><path d="M2 2l17 17M19 2L2 19" stroke="#fff" stroke-width="2.6"/></svg>
<!-- floating grey buttons -->
<div class="a" style="left:58px;top:158px;width:72px;height:56px;background:#e1e1e5;border-radius:28px 0 0 28px;box-shadow:0 2px 4px rgba(0,0,0,.15), inset -8px 0 8px -6px rgba(0,0,0,.12)"></div>
<svg style="left:78px;top:171px" width="28" height="30" viewBox="0 0 28 30" fill="none" stroke="#525c69" stroke-width="2.4" stroke-linecap="round"><path d="M6 5l15 15M21 9v11H10M3 27h22"/></svg>
<div class="a" style="left:58px;top:234px;width:72px;height:56px;background:#e1e1e5;border-radius:28px 0 0 28px;box-shadow:0 2px 4px rgba(0,0,0,.15), inset -8px 0 8px -6px rgba(0,0,0,.12)"></div>
<svg style="left:78px;top:248px" width="28" height="28" viewBox="0 0 28 28" fill="none" stroke="#525c69" stroke-width="2.4" stroke-linecap="round" stroke-linejoin="round"><path d="M12 4H6a3 3 0 0 0-3 3v15a3 3 0 0 0 3 3h15a3 3 0 0 0 3-3v-6M14 14L25 3M17 3h8v8"/></svg>
<div class="a" style="left:58px;top:310px;width:72px;height:56px;background:#e1e1e5;border-radius:28px 0 0 28px;box-shadow:0 2px 4px rgba(0,0,0,.15), inset -8px 0 8px -6px rgba(0,0,0,.12)"></div>
<svg style="left:78px;top:324px" width="28" height="28" viewBox="0 0 24 24" fill="none" stroke="#525c69" stroke-width="2.2" stroke-linecap="round"><path d="M10 14a4.5 4.5 0 0 0 6.4 0l3-3a4.5 4.5 0 0 0-6.4-6.4l-1.2 1.2"/><path d="M14 10a4.5 4.5 0 0 0-6.4 0l-3 3a4.5 4.5 0 0 0 6.4 6.4l1.2-1.2"/></svg>
<div class="a" style="left:58px;top:538px;width:72px;height:56px;background:#e1e1e5;border-radius:28px 0 0 28px;box-shadow:0 2px 4px rgba(0,0,0,.15), inset -8px 0 8px -6px rgba(0,0,0,.12)"></div>
<svg style="left:78px;top:552px" width="28" height="28" viewBox="0 0 28 28" fill="none" stroke="#525c69" stroke-width="2.4" stroke-linejoin="round"><path d="M8 9V3h12v6M6 21H4a2 2 0 0 1-2-2v-8a2 2 0 0 1 2-2h20a2 2 0 0 1 2 2v8a2 2 0 0 1-2 2h-2M8 16h12v10H8z"/><path d="M19 12h3" stroke-linecap="round"/></svg>

<!-- scrollbar -->
<div class="a" style="left:2720px;top:62px;width:12px;height:962px;background:#c2c4c6"></div>

<!-- PANEL CONTENT PLACEHOLDER -->

</body></html>
